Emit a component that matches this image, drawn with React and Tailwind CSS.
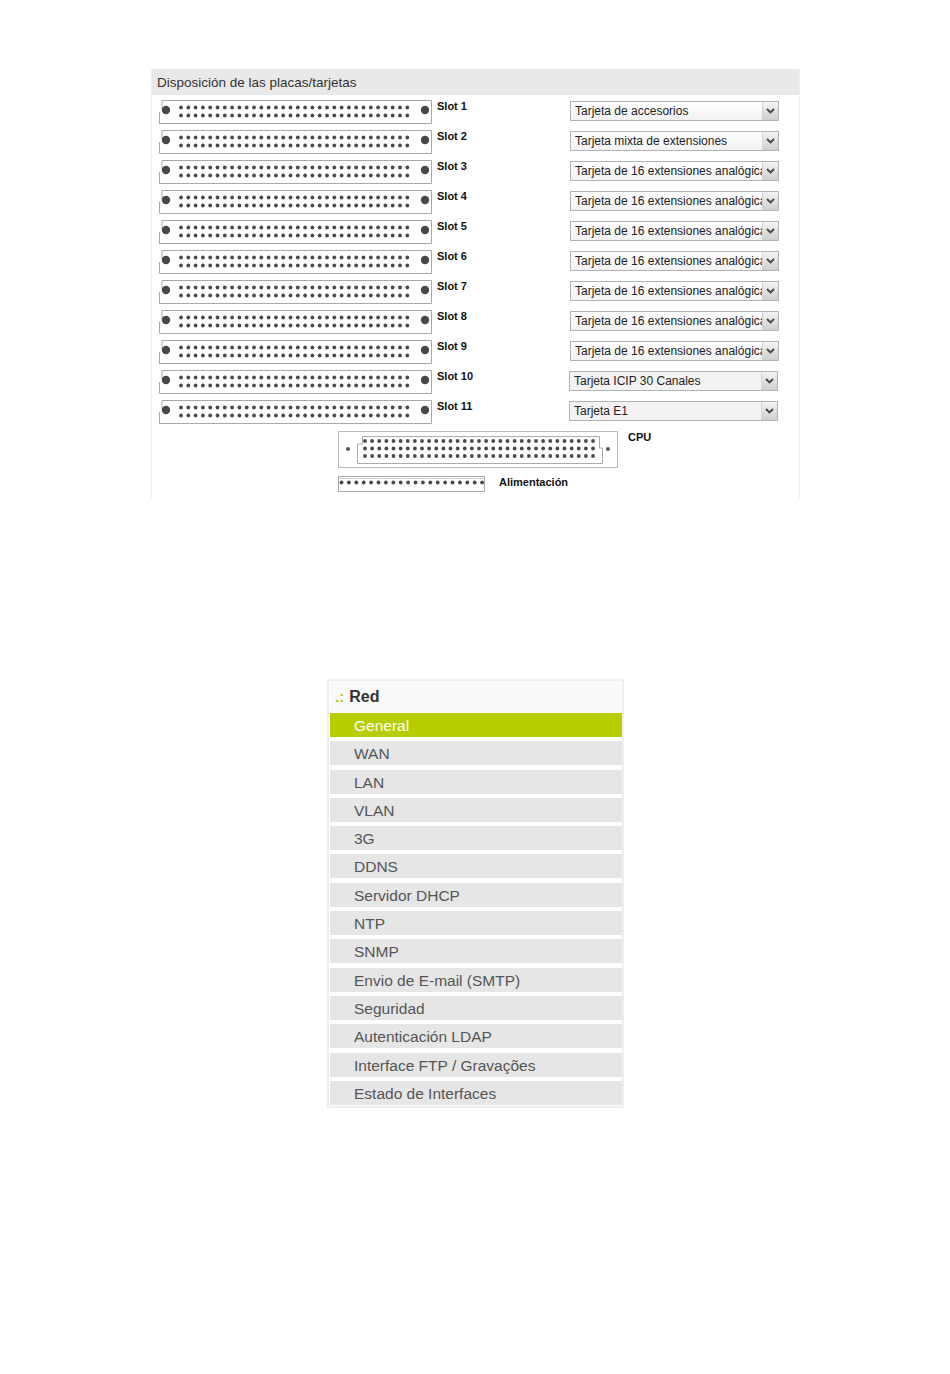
import React from "react";

const SLOTS = [
  "Tarjeta de accesorios",
  "Tarjeta mixta de extensiones",
  "Tarjeta de 16 extensiones analógicas",
  "Tarjeta de 16 extensiones analógicas",
  "Tarjeta de 16 extensiones analógicas",
  "Tarjeta de 16 extensiones analógicas",
  "Tarjeta de 16 extensiones analógicas",
  "Tarjeta de 16 extensiones analógicas",
  "Tarjeta de 16 extensiones analógicas",
  "Tarjeta ICIP 30 Canales",
  "Tarjeta E1",
];

const MENU = [
  "General",
  "WAN",
  "LAN",
  "VLAN",
  "3G",
  "DDNS",
  "Servidor DHCP",
  "NTP",
  "SNMP",
  "Envio de E-mail (SMTP)",
  "Seguridad",
  "Autenticación LDAP",
  "Interface FTP / Gravações",
  "Estado de Interfaces",
];

const range = (n, start, step) => Array.from({ length: n }, (_, i) => start + i * step);

// connector drawing for one expansion slot
const SlotConnector = () => (
  <svg width="274" height="25" viewBox="0 0 274 25" className="shrink-0">
    <path d="M3 9V0.5H272.5V23.5H0.5V12" fill="none" stroke="#a8a8a8" />
    <circle cx="7" cy="10" r="4.2" fill="#484848" />
    <circle cx="266" cy="10" r="4.2" fill="#484848" />
    {range(32, 22, 7.3).map((x) => (
      <g key={x}>
        <circle cx={x} cy="7.5" r="1.9" fill="#4a4a4a" />
        <circle cx={x} cy="15.5" r="1.9" fill="#4a4a4a" />
      </g>
    ))}
  </svg>
);

const CpuConnector = () => (
  <svg width="280" height="37" viewBox="0 0 280 37" className="shrink-0">
    <rect x="0.5" y="0.5" width="279" height="36" fill="none" stroke="#bbb" />
    <path d="M24.5 5.5H261.5V17H264.5V32.5H19.5V13H24.5Z" fill="none" stroke="#aaa" />
    <circle cx="10" cy="18" r="2" fill="#555" />
    <circle cx="270" cy="18" r="2" fill="#555" />
    {range(33, 27, 7.125).map((x) => (
      <g key={x}>
        <circle cx={x} cy="10" r="1.9" fill="#4a4a4a" />
        <circle cx={x} cy="17.5" r="1.9" fill="#4a4a4a" />
        <circle cx={x} cy="25" r="1.9" fill="#4a4a4a" />
      </g>
    ))}
  </svg>
);

const PowerConnector = () => (
  <svg width="147" height="17" viewBox="0 0 147 17" className="shrink-0">
    <path d="M0.5 0.5H146.5M0.5 2.5H146.5" stroke="#bbb" strokeDasharray="2 1" />
    <rect x="0.5" y="0.5" width="146" height="15" fill="none" stroke="#aaa" />
    {range(20, 3.5, 7.4).map((x) => (
      <circle key={x} cx={x} cy="6.5" r="1.9" fill="#4a4a4a" />
    ))}
  </svg>
);

const Select = ({ value, gray }) => (
  <div
    className={`flex h-[20px] w-[209px] border border-[#b3b3b3] ${
      gray ? "bg-[#f3f3f3]" : "bg-gradient-to-b from-white to-[#f2f2f2]"
    }`}
  >
    <span className="flex-1 overflow-hidden whitespace-nowrap pl-[4px] text-[12px] leading-[19px] text-[#222]">
      {value}
    </span>
    <span className="flex w-[16px] items-center justify-center border-l border-[#d5d5d5] bg-gradient-to-b from-[#f4f4f4] to-[#cfcfcf]">
      <svg width="9" height="6" viewBox="0 0 9 6">
        <path d="M1 1L4.5 4.5L8 1" fill="none" stroke="#444" strokeWidth="1.8" />
      </svg>
    </span>
  </div>
);

export default function App() {
  return (
    <div className="h-[1374px] w-[950px] bg-white pt-[69px] font-['Liberation_Sans',Arial,sans-serif]">
      {/* Slot layout */}
      <section className="ml-[151px] w-[649px] border-x border-[#f0f0f0] pb-[6px]">
        <h2 className="h-[26px] bg-[#e9e9e9] pl-[5px] text-[13.5px] leading-[28px] text-[#333]">
          Disposición de las placas/tarjetas
        </h2>
        <div className="pt-[5px]">
          {SLOTS.map((card, i) => (
            <div key={i} className="flex h-[30px] items-start">
              <div className="ml-[7px]">
                <SlotConnector />
              </div>
              <span className="ml-[4px] w-[133px] text-[11px] font-bold leading-[13px] text-[#111]">
                Slot {i + 1}
              </span>
              <div className={i >= 9 ? "-ml-px mt-[1px]" : "mt-[1px]"}>
                <Select value={card} gray={i >= 9} />
              </div>
            </div>
          ))}
        </div>
        <div className="ml-[186px] mt-[1px] flex items-start">
          <CpuConnector />
          <span className="ml-[10px] text-[11px] font-bold leading-[13px] text-[#111]">CPU</span>
        </div>
        <div className="ml-[186px] mt-[8px] flex items-start">
          <PowerConnector />
          <span className="ml-[14px] text-[11px] font-bold leading-[13px] text-[#111]">
            Alimentación
          </span>
        </div>
      </section>

      {/* Network menu */}
      <nav className="ml-[327px] mt-[180px] w-[297px] border-2 border-[#efefef] bg-white pl-px">
        <div className="flex h-[32px] items-center gap-[5px] bg-[#fafafa] pl-[5px]">
          <span className="text-[15px] font-bold text-[#b5cc00]">.:</span>
          <span className="text-[16px] font-bold text-[#333]">Red</span>
        </div>
        <ul className="flex flex-col gap-[4.3px] pb-[1px]">
          {MENU.map((item, i) => (
            <li
              key={item}
              className={`h-[24px] pl-[24px] text-[15.5px] leading-[26px] ${
                i === 0 ? "bg-[#b6cd00] text-white" : "bg-[#e6e6e6] text-[#555]"
              }`}
            >
              {item}
            </li>
          ))}
        </ul>
      </nav>
    </div>
  );
}
